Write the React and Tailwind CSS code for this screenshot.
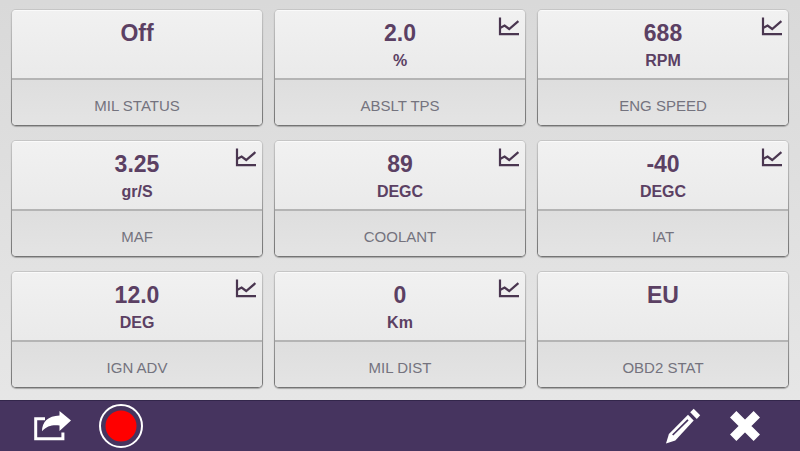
import React from 'react';

const readings = [
    { label: 'MIL STATUS', value: 'Off' },
    { label: 'ABSLT TPS', value: '2.0', unit: '%', chart: true },
    { label: 'ENG SPEED', value: '688', unit: 'RPM', chart: true },
    { label: 'MAF', value: '3.25', unit: 'gr/S', chart: true },
    { label: 'COOLANT', value: '89', unit: 'DEGC', chart: true },
    { label: 'IAT', value: '-40', unit: 'DEGC', chart: true },
    { label: 'IGN ADV', value: '12.0', unit: 'DEG', chart: true },
    { label: 'MIL DIST', value: '0', unit: 'Km', chart: true },
    { label: 'OBD2 STAT', value: 'EU' },
];

const ChartIcon = () => (
    <svg width="22" height="20" viewBox="0 0 22 20" fill="none" stroke="#4a3650" strokeWidth="2.2">
        <path d="M2 .5v16.700h19" />
        <path d="M2 11l4.600-2.400 4.600 3.400 9.200-7.800" />
    </svg>
);

const ShareIcon = () => (
    <svg width="38" height="32" viewBox="0 0 38 32">
        <path d="M12 8.700H2.700v20.100h27.200v-6.300" fill="none" stroke="#fff" strokeWidth="3" />
        <path d="M26.500 1L38 10.500 26.500 21v-5.500c-7-.8-12.700.3-17.500 5.700C9 12 15 6 26.500 5.500z" fill="#fff" />
    </svg>
);

const RecordIcon = () => (
    <svg width="44" height="44" viewBox="0 0 44 44">
        <circle cx="22" cy="22" r="21" fill="none" stroke="#fff" strokeWidth="2" />
        <circle cx="22" cy="22" r="15.500" fill="#f00" />
    </svg>
);

const PencilIcon = () => (
    <svg width="37" height="36" viewBox="0 0 37 36">
        <path d="M29.700.8l6.500 6.500-3.400 3.700-6.600-6.700z" fill="#fff" />
        <path d="M24 6.800l5.700 5.700L11.300 32.500 2 35.400 4.900 26z" fill="#fff" />
        <path d="M8.700 27L24 11.800" stroke="#46345f" strokeWidth="1.700" />
    </svg>
);

const CloseIcon = () => (
    <svg width="32" height="32" viewBox="0 0 32 32">
        <path d="M4.200 4.200l23.600 23.600M27.800 4.200L4.200 27.800" stroke="#fff" strokeWidth="9" />
    </svg>
);

const ReadingCard = ({ label, value, unit, chart }) => (
    // the outer gradient shows through as a border that darkens downwards
    <li className="relative rounded-[5px] bg-linear-to-b from-[#c6c6c6] via-[#a2a2a2] to-[#747474] p-px shadow-[0_1px_1px_#a8a8a8]">
        <div className="overflow-hidden rounded-sm bg-[#e2e2e2] text-center">
            <div className="h-[68px] border-t border-[#fafafa] bg-linear-to-b from-[#f1f1f1] to-[#eaeaea] pt-2 font-bold text-[#5b4063]">
                <p className="text-[23px] leading-7">{value}</p>
                {unit && <p className="text-base leading-7">{unit}</p>}
            </div>
            <h2 className="border-t-2 border-[#b4b4b4] bg-linear-to-b from-[#dedede] to-[#e4e4e4] pt-4 pb-[9px] text-[15px] leading-5 font-medium text-[#74737e]">
                {label}
            </h2>
        </div>
        {chart && (
            <button type="button" aria-label={`${label} chart`} className="absolute top-2 right-1.5">
                <ChartIcon />
            </button>
        )}
    </li>
);

const App = () => (
    <div className="flex min-h-screen flex-col bg-linear-to-b from-[#d9d9d9] to-[#e8e8e8] font-['Liberation_Sans',Arial,sans-serif]">
        <main className="flex-1 px-[11px] pt-[9px] pb-[11px]">
            <ul className="grid grid-cols-3 gap-x-[11px] gap-y-[14px]">
                {readings.map(reading => (
                    <ReadingCard key={reading.label} {...reading} />
                ))}
            </ul>
        </main>
        <footer className="flex items-center justify-between border-t border-[#33264b] bg-[#46345f] py-[3px] pr-[39px] pl-[33px]">
            <div className="flex items-center gap-7">
                <button type="button" aria-label="Share"><ShareIcon /></button>
                <button type="button" aria-label="Record"><RecordIcon /></button>
            </div>
            <div className="flex items-center gap-7">
                <button type="button" aria-label="Edit"><PencilIcon /></button>
                <button type="button" aria-label="Close"><CloseIcon /></button>
            </div>
        </footer>
    </div>
);

export default App;
